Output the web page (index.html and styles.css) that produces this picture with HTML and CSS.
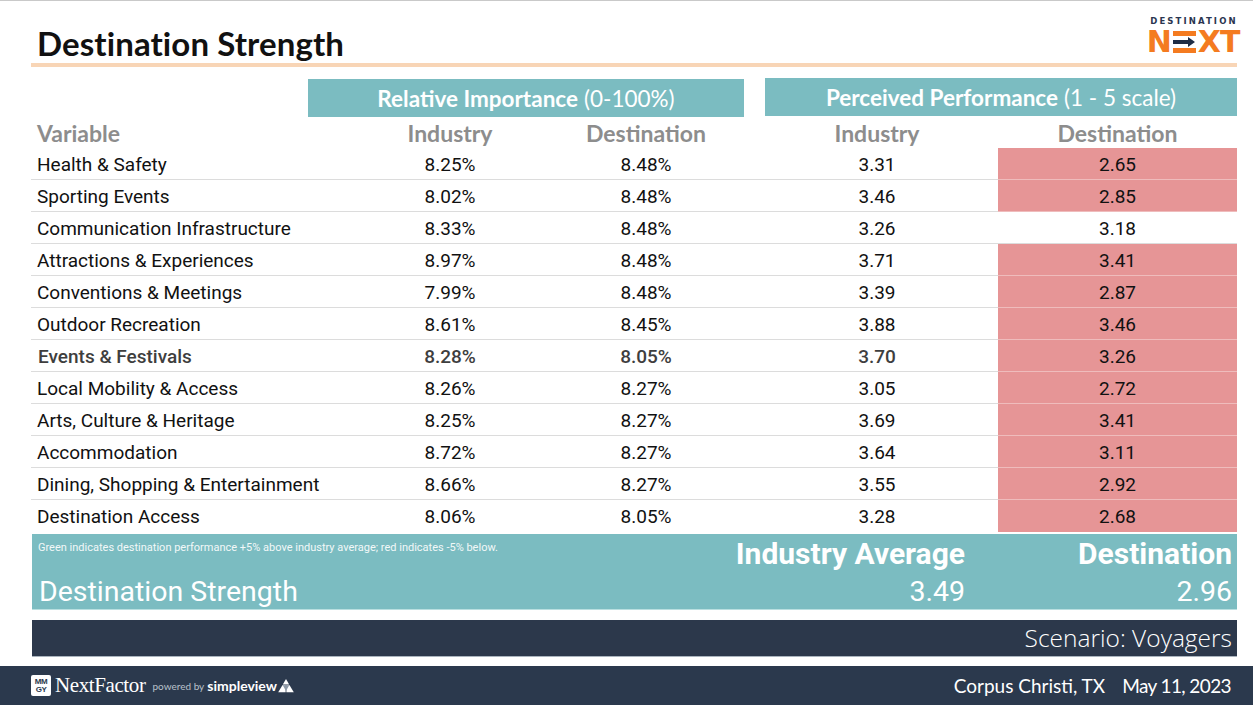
FILE: index.html
```html
<!DOCTYPE html>
<html>
<head>
<meta charset="utf-8">
<link rel="stylesheet" href="styles.css">
</head>
<body>
<div class="page">
  <header class="top">
    <h1 class="title">Destination Strength</h1>
    <div class="logo">
      <div class="logo-small">DESTINATION</div>
      <div class="logo-big"><span>N</span><svg class="logo-e" width="24" height="22" viewBox="0 0 24 22"><rect x="0" y="0" width="23" height="5" fill="#f47b20"/><rect x="0" y="17" width="23" height="5" fill="#f47b20"/><path d="M0 9h15V6l7 5-7 5v-3H0z" fill="#1f2d45"/></svg><span>XT</span></div>
    </div>
  </header>
  <div class="rule"></div>

  <section class="table">
    <div class="bands">
      <div class="band band-ri"><b>Relative Importance</b><span>(0-100%)</span></div>
      <div class="band band-pp"><b>Perceived Performance</b><span>(1 - 5 scale)</span></div>
    </div>
    <div class="grid">
      <div class="hd var">Variable</div>
      <div class="hd c">Industry</div>
      <div class="hd c">Destination</div>
      <div class="hd c pd">Industry</div>
      <div class="hd c">Destination</div>

      <div class="cell var">Health &amp; Safety</div><div class="cell c">8.25%</div><div class="cell c">8.48%</div><div class="cell c pd">3.31</div><div class="cell c red">2.65</div>
      <div class="cell var">Sporting Events</div><div class="cell c">8.02%</div><div class="cell c">8.48%</div><div class="cell c pd">3.46</div><div class="cell c red">2.85</div>
      <div class="cell var">Communication Infrastructure</div><div class="cell c">8.33%</div><div class="cell c">8.48%</div><div class="cell c pd">3.26</div><div class="cell c plain">3.18</div>
      <div class="cell var">Attractions &amp; Experiences</div><div class="cell c">8.97%</div><div class="cell c">8.48%</div><div class="cell c pd">3.71</div><div class="cell c red">3.41</div>
      <div class="cell var">Conventions &amp; Meetings</div><div class="cell c">7.99%</div><div class="cell c">8.48%</div><div class="cell c pd">3.39</div><div class="cell c red">2.87</div>
      <div class="cell var">Outdoor Recreation</div><div class="cell c">8.61%</div><div class="cell c">8.45%</div><div class="cell c pd">3.88</div><div class="cell c red">3.46</div>
      <div class="cell var alt">Events &amp; Festivals</div><div class="cell c alt">8.28%</div><div class="cell c alt">8.05%</div><div class="cell c pd alt">3.70</div><div class="cell c red">3.26</div>
      <div class="cell var">Local Mobility &amp; Access</div><div class="cell c">8.26%</div><div class="cell c">8.27%</div><div class="cell c pd">3.05</div><div class="cell c red">2.72</div>
      <div class="cell var">Arts, Culture &amp; Heritage</div><div class="cell c">8.25%</div><div class="cell c">8.27%</div><div class="cell c pd">3.69</div><div class="cell c red">3.41</div>
      <div class="cell var">Accommodation</div><div class="cell c">8.72%</div><div class="cell c">8.27%</div><div class="cell c pd">3.64</div><div class="cell c red">3.11</div>
      <div class="cell var">Dining, Shopping &amp; Entertainment</div><div class="cell c">8.66%</div><div class="cell c">8.27%</div><div class="cell c pd">3.55</div><div class="cell c red">2.92</div>
      <div class="cell var last">Destination Access</div><div class="cell c last">8.06%</div><div class="cell c last">8.05%</div><div class="cell c pd last">3.28</div><div class="cell c red last">2.68</div>
    </div>
  </section>

  <section class="summary">
    <div class="note">Green indicates destination performance +5% above industry average; red indicates -5% below.</div>
    <div class="sum-h">Industry Average</div>
    <div class="sum-h">Destination</div>
    <div class="sum-label">Destination Strength</div>
    <div class="sum-v">3.49</div>
    <div class="sum-v">2.96</div>
  </section>

  <div class="scenario">Scenario: Voyagers</div>

  <footer class="foot">
    <div class="brands">
      <div class="mmgy"><span>MM</span><span>GY</span></div>
      <span class="nf">NextFactor</span>
      <span class="pb">powered by</span>
      <span class="sv">simpleview</span>
      <svg class="sv-icon" width="16" height="14" viewBox="0 0 16 14"><path d="M8 0l3.2 5.5H4.8z" fill="#fff"/><path d="M4.4 6.3h3.2v7H0.2z" fill="#fff"/><path d="M8.4 6.3h3.2l4.2 7H8.4z" fill="#fff"/><path d="M4.8 6.3h6.4L8 12z" fill="#8e9aa8"/></svg>
    </div>
    <div class="place"><span>Corpus Christi, TX</span><span class="date">May 11, 2023</span></div>
  </footer>
</div>
</body>
</html>
```

FILE: styles.css
```css
* { box-sizing: border-box; }
html, body { margin: 0; padding: 0; }
body {
  width: 1253px;
  height: 705px;
  background: #fff;
  overflow: hidden;
  font-family: Roboto, "Liberation Sans", sans-serif;
}
.page {
  width: 1253px;
  height: 705px;
  border-top: 1px solid #c9c9c9;
  display: flex;
  flex-direction: column;
}
.top {
  height: 62px;
  display: flex;
  justify-content: space-between;
  align-items: flex-start;
  padding: 0 15px 0 37px;
}
.title {
  margin: 23px 0 0 0;
  font-family: Lato, "Open Sans", sans-serif;
  font-weight: 700;
  font-size: 33px;
  line-height: 38px;
  color: #111;
  letter-spacing: 0.1px;
}
.logo {
  margin-top: 16px;
  width: 90px;
  display: flex;
  flex-direction: column;
  align-items: center;
}
.logo-small {
  font-family: "DejaVu Sans", sans-serif;
  font-size: 8.5px;
  font-weight: 700;
  letter-spacing: 2.1px;
  color: #2a3550;
  line-height: 9px;
  margin-left: 2px;
}
.logo-big {
  display: flex;
  align-items: center;
  font-family: "DejaVu Sans", sans-serif;
  font-weight: 700;
  font-size: 30px;
  line-height: 22px;
  height: 23px;
  color: #f47b20;
  margin-top: 4px;
  letter-spacing: -1px;
}
.logo-e { margin: 0 1px 0 2px; }
.rule {
  height: 4px;
  margin: 0 16px 0 31px;
  background: #f8d5b6;
}
.table {
  margin: 12px 16px 0 31px;
}
.bands {
  display: flex;
  gap: 21px;
  padding-left: 277px;
}
.band {
  height: 38px;
  background: #7bbcc1;
  color: #fff;
  display: flex;
  align-items: center;
  justify-content: center;
  font-family: Lato, "Open Sans", sans-serif;
  font-size: 22.5px;
}
.band b { font-weight: 700; }
.band span { font-weight: 400; margin-left: 6px; }
.band-ri { width: 436px; }
.band-pp { width: 472px; margin-top: -1px; }
.grid {
  display: grid;
  grid-template-columns: 309px 220px 172px 266px 239px;
  grid-auto-rows: 32px;
  grid-template-rows: 31px;
}
.hd {
  font-family: Lato, "Open Sans", sans-serif;
  font-weight: 700;
  font-size: 23px;
  color: #8d8d8d;
  display: flex;
  align-items: center;
  padding-top: 1px;
}
.hd.var { padding-left: 6px; }
.c { justify-content: center; text-align: center; }
.pd { padding-left: 24px; }
.cell {
  display: flex;
  align-items: center;
  font-size: 19px;
  color: #111;
  border-bottom: 1px solid #dcdcdc;
  padding-top: 1px;
}
.cell.var { padding-left: 6px; }
.cell.red {
  background: #e69596;
  border-bottom: 1px solid #efbcbc;
}
.cell.plain { border-bottom: 1px solid #dcdcdc; }
.cell.last { border-bottom: none; }
.cell.alt {
  color: #3e3e3e;
  font-weight: 500;
}
.cell.var.alt { padding-left: 7px; }
.summary {
  margin: 2px 16px 0 32px;
  height: 76px;
  background: #7bbcc1;
  border-bottom: 1px solid #b9dfe0;
  display: grid;
  grid-template-columns: 1fr auto 267px;
  grid-template-rows: 37px 38px;
  padding-right: 5px;
  color: #fff;
}
.note {
  font-size: 11px;
  padding: 7px 0 0 6px;
  color: #f2f8f8;
}
.sum-h {
  font-size: 30px;
  font-weight: 700;
  text-align: right;
  line-height: 36px;
  padding-top: 2px;
}
.sum-label {
  font-size: 28.5px;
  font-weight: 400;
  padding-left: 7px;
  line-height: 38px;
  padding-top: 2px;
}
.sum-v {
  font-size: 28.5px;
  font-weight: 400;
  text-align: right;
  line-height: 38px;
  padding-top: 2px;
}
.scenario {
  margin: 10px 16px 0 32px;
  height: 37px;
  background: #2c384b;
  color: #fff;
  font-family: "Open Sans", sans-serif;
  font-weight: 300;
  font-size: 24.5px;
  text-align: right;
  padding-right: 5px;
  line-height: 36px;
  border-bottom: 1px solid #aab4be;
}
.foot {
  margin-top: 9px;
  height: 39px;
  background: #2b394d;
  display: flex;
  justify-content: space-between;
  align-items: center;
  padding: 0 22px 0 31px;
}
.brands {
  display: flex;
  align-items: center;
}
.mmgy {
  width: 20px;
  height: 21px;
  background: #fff;
  border-radius: 2px;
  display: flex;
  flex-direction: column;
  align-items: center;
  justify-content: center;
  font-family: "Liberation Sans", sans-serif;
  font-weight: 700;
  font-size: 8px;
  line-height: 8px;
  color: #2b394d;
  letter-spacing: -0.5px;
}
.nf {
  font-family: "Liberation Serif", serif;
  font-size: 21px;
  color: #fff;
  margin-left: 4px;
  letter-spacing: -0.4px;
}
.pb {
  font-family: Lato, sans-serif;
  font-size: 10px;
  color: #b9c1cb;
  margin-left: 7px;
}
.sv {
  font-family: Lato, sans-serif;
  font-weight: 700;
  font-size: 14px;
  color: #fff;
  margin-left: 3px;
}
.sv-icon { margin-left: 1px; }
.place {
  display: flex;
  gap: 17px;
  font-family: Lato, sans-serif;
  font-size: 19px;
  color: #fff;
}
.date { letter-spacing: -0.6px; }
```
